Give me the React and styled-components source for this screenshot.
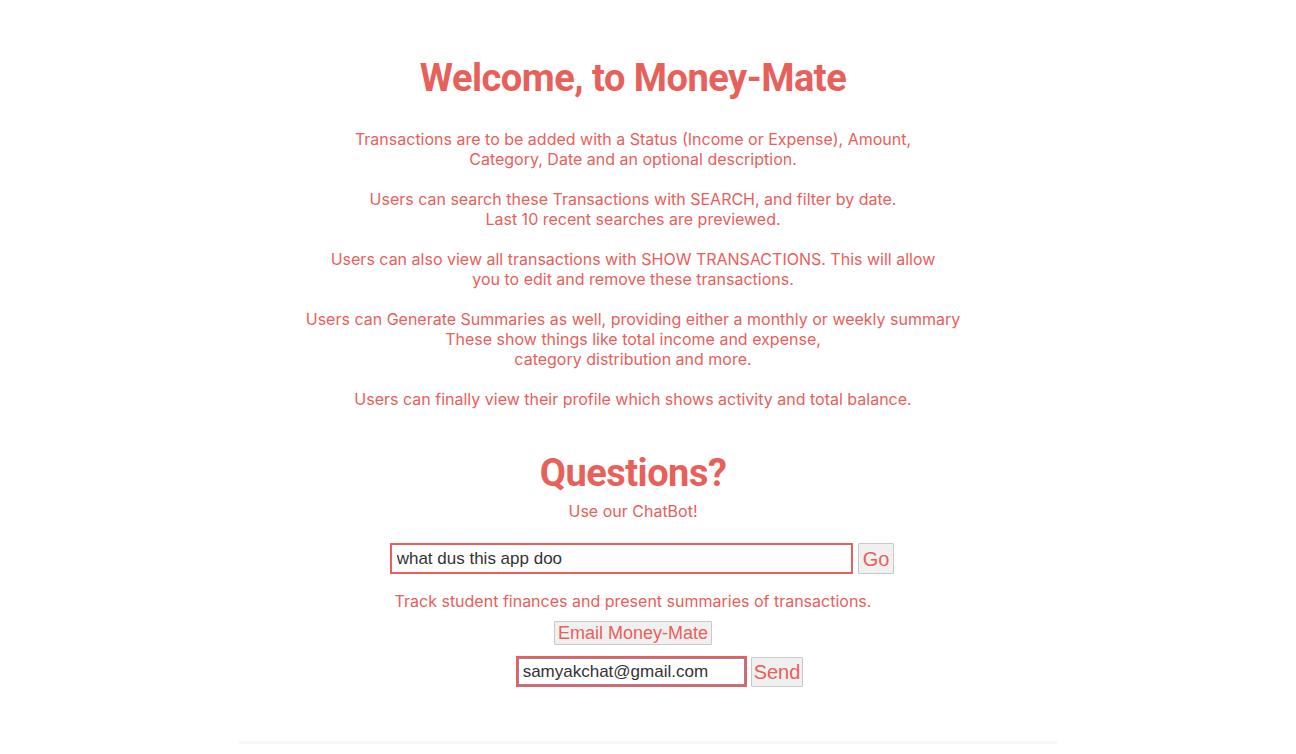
import React from "react";
import styled, { createGlobalStyle } from "styled-components";

const Global = createGlobalStyle`
  html, body {
    margin: 0;
    padding: 0;
    background: #ffffff;
  }
  body {
    font-family: Inter, Roboto, "Liberation Sans", sans-serif;
  }
`;

const red = "#e8605a";

const Page = styled.div`
  width: 1266px;
  height: 754px;
  display: flex;
  flex-direction: column;
  align-items: center;
  text-align: center;
  color: ${red};
  padding-top: 54px;
  box-sizing: border-box;
`;

const Title = styled.h1`
  margin: 0;
  font-family: Roboto, "Liberation Sans", sans-serif;
  font-weight: bold;
  font-size: 38px;
  line-height: 48px;
  letter-spacing: -0.5px;
`;

const Info = styled.p`
  margin: 27px 0 0;
  font-size: 16px;
  line-height: 20px;
`;

const Questions = styled(Title)`
  margin-top: 40px;
`;

const Sub = styled.p`
  margin: ${(p) => p.top}px 0 0;
  font-size: 16px;
  line-height: 20px;
`;

const Row = styled.div`
  display: flex;
  align-items: center;
  gap: ${(p) => p.gap || 5}px;
  margin-top: ${(p) => p.top}px;
  margin-left: ${(p) => p.shift || 0}px;
`;

const Field = styled.input`
  box-sizing: border-box;
  width: ${(p) => p.w}px;
  height: 31px;
  border: 2px solid ${red};
  outline: ${(p) => (p.focus ? "1.5px solid #9a7fb0" : "none")};
  outline-offset: -3.5px;
  padding: 0 5px;
  font-family: "Liberation Sans", Arial, sans-serif;
  font-size: 17px;
  color: #333;
  background: #fff;
`;

const Btn = styled.button`
  box-sizing: border-box;
  height: ${(p) => p.h || 31}px;
  padding: 0 ${(p) => p.pad || 3}px;
  background: #f0f0f0;
  border: 1px solid #c9c9c9;
  border-radius: 1px;
  color: ${red};
  font-family: "Liberation Sans", Arial, sans-serif;
  font-size: ${(p) => p.fs || 20}px;
  line-height: 1;
  cursor: pointer;
`;

const EmailBtn = styled(Btn)`
  margin-top: 10px;
`;

const Divider = styled.div`
  margin-top: auto;
  margin-bottom: 10px;
  width: 820px;
  height: 3px;
  background: #f8f8f8;
  align-self: center;
  transform: translateX(15px);
`;

export default function App() {
  return (
    <>
      <Global />
      <Page>
        <Title>Welcome, to Money-Mate</Title>
        <Info>
          Transactions are to be added with a Status (Income or Expense), Amount,
          <br />
          Category, Date and an optional description.
          <br />
          <br />
          Users can search these Transactions with SEARCH, and filter by date.
          <br />
          Last 10 recent searches are previewed.
          <br />
          <br />
          Users can also view all transactions with SHOW TRANSACTIONS. This will allow
          <br />
          you to edit and remove these transactions.
          <br />
          <br />
          Users can Generate Summaries as well, providing either a monthly or weekly summary
          <br />
          These show things like total income and expense,
          <br />
          category distribution and more.
          <br />
          <br />
          Users can finally view their profile which shows activity and total balance.
        </Info>
        <Questions>Questions?</Questions>
        <Sub top={4}>Use our ChatBot!</Sub>
        <Row top={22} shift={18}>
          <Field w={463} defaultValue="what dus this app doo" />
          <Btn pad={4}>Go</Btn>
        </Row>
        <Sub top={17}>Track student finances and present summaries of transactions.</Sub>
        <EmailBtn h={24} fs={18} pad={3}>
          Email Money-Mate
        </EmailBtn>
        <Row top={11} gap={4} shift={53}>
          <Field w={231} focus defaultValue="samyakchat@gmail.com" />
          <Btn h={30} pad={2}>Send</Btn>
        </Row>
        <Divider />
      </Page>
    </>
  );
}
